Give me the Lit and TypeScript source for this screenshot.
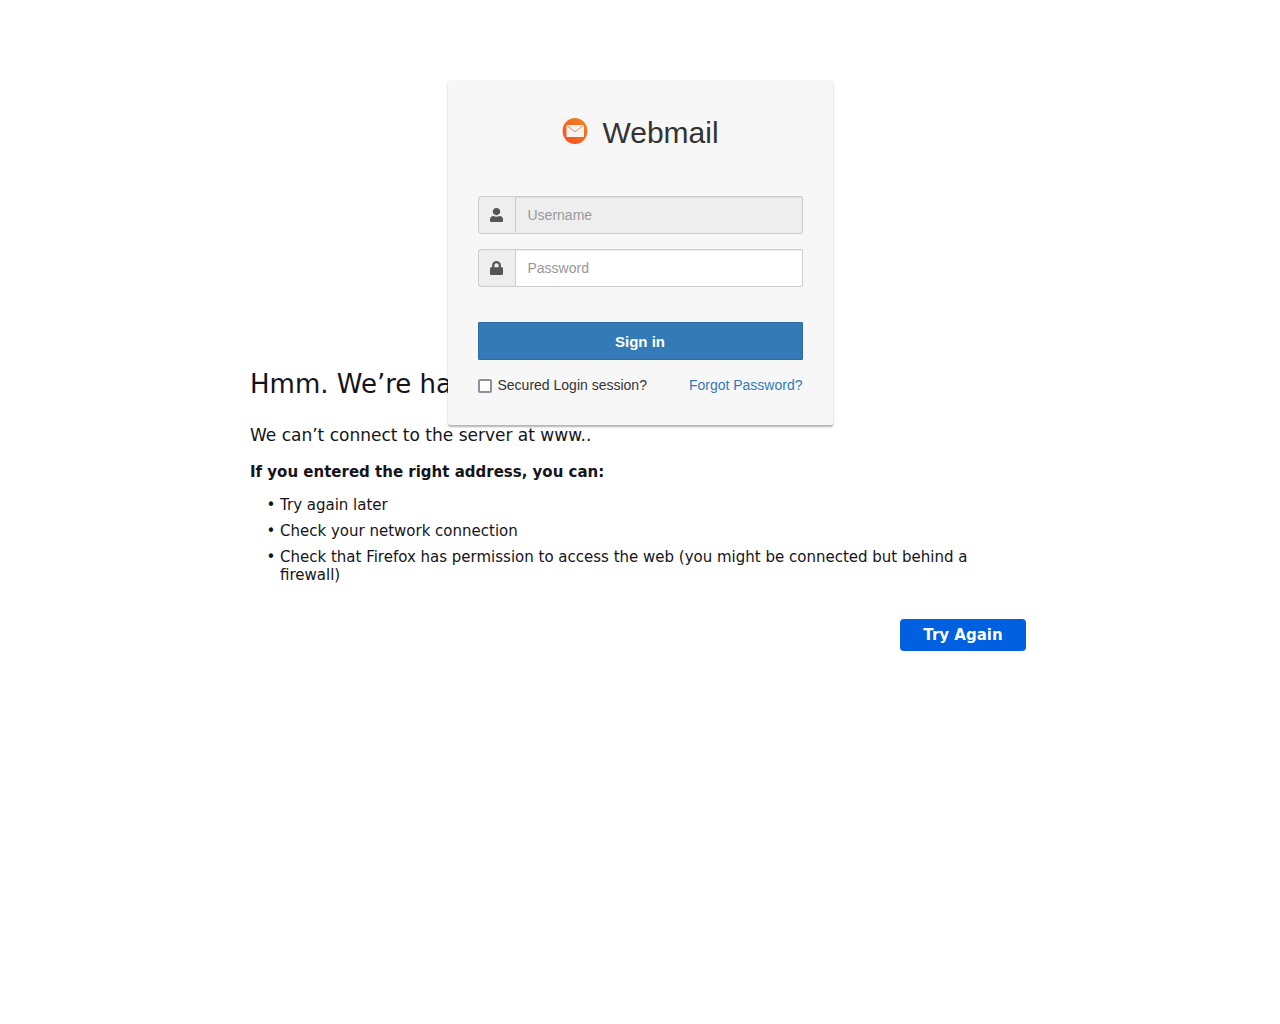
import { LitElement, html, css, svg } from "lit";
import { customElement } from "lit/decorators.js";

const userIcon = svg`<path fill="currentColor" d="M224 262c72 0 130-58 130-131S296 0 224 0 94 58 94 131s58 131 130 131zm104 26c-30 18-66 28-104 28s-74-10-104-28C46 288 0 340 0 412v52c0 26.500 21.500 48 48 48h352c26.500 0 48-21.500 48-48v-52c0-72-46-124-120-124z"/>`;
const lockIcon = svg`<path fill="currentColor" d="M400 224h-24v-72C376 68.200 307.800 0 224 0S72 68.200 72 152v72H48c-26.500 0-48 21.500-48 48v192c0 26.500 21.500 48 48 48h352c26.500 0 48-21.500 48-48V272c0-26.500-21.500-48-48-48zm-104 0H152v-72c0-39.700 32.300-72 72-72s72 32.300 72 72v72z"/>`;

@customElement("login-card")
export class LoginCard extends LitElement {
  static styles = css`
    :host {
      display: block;
      box-sizing: border-box;
      padding: 30px;
      border-radius: 2px;
      background: #f7f7f7;
      box-shadow: 0 2px 2px rgba(0, 0, 0, 0.3);
      color: #333;
      font: 14px/20px "Liberation Sans", Arial, sans-serif;
    }
    .brand {
      display: flex;
      align-items: center;
      justify-content: center;
      gap: 13px;
      margin: 0 0 43px;
      padding-top: 3px;
      font-size: 30px;
      line-height: 40px;
      font-weight: 400;
    }
    .logo {
      width: 28px;
      height: 28px;
      margin-bottom: 4px;
    }
    .form {
      display: flex;
      flex-direction: column;
    }
    .field {
      display: flex;
      margin-bottom: 15px;
    }
    .addon {
      display: grid;
      place-items: center;
      box-sizing: border-box;
      width: 37px;
      border: 1px solid #ccc;
      border-right: 0;
      border-radius: 4px 0 0 4px;
      background: #eee;
      color: #555;
    }
    .glyph {
      width: 13px;
      height: 14px;
    }
    .input {
      box-sizing: border-box;
      flex: 1;
      min-width: 0;
      height: 38px;
      margin: 0;
      padding: 6px 12px;
      border: 1px solid #ccc;
      border-radius: 0 2px 2px 0;
      background: #fff;
      box-shadow: inset 0 1px 1px rgba(0, 0, 0, 0.075);
      color: #555;
      font: inherit;
    }
    .input:read-only {
      background: #eee;
    }
    .input::placeholder {
      color: #999;
      opacity: 1;
    }
    .submit {
      height: 38px;
      margin: 20px 0 15px;
      padding: 1px 12px 0;
      border: 1px solid #2e6da4;
      border-radius: 1px;
      background: #337ab7;
      color: #fff;
      font: bold 15px/20px "Liberation Sans", Arial, sans-serif;
      cursor: pointer;
    }
    .options {
      display: flex;
      justify-content: space-between;
    }
    .remember {
      display: flex;
      align-items: center;
      gap: 6px;
    }
    .check {
      appearance: none;
      box-sizing: border-box;
      width: 14px;
      height: 14px;
      margin: 2px 0 0;
      border: 2px solid #8f8f9d;
      border-radius: 2px;
      background: #fff;
    }
    .check:checked {
      background: #0060df;
    }
    .forgot {
      color: #337ab7;
      text-decoration: none;
    }
  `;

  render() {
    return html`
      <h1 class="brand">
        <svg class="logo" viewBox="0 0 28 28" aria-hidden="true">
          <defs>
            <linearGradient id="disc" x1="0" y1="0.8" x2="0.7" y2="0">
              <stop offset="0" stop-color="#f6511f" />
              <stop offset="1" stop-color="#f08024" />
            </linearGradient>
          </defs>
          <rect width="28" height="28" fill="#f5f5f5" />
          <ellipse cx="14" cy="14" rx="12.400" ry="13" fill="url(#disc)" />
          <rect x="5.500" y="8" width="17.500" height="12" fill="#f5f3f1" />
          <path d="M5.500 8 14 14.800 23 8" fill="none" stroke="#ec9060" stroke-width="1" />
        </svg>
        <span>Webmail</span>
      </h1>
      <form class="form" @submit=${(e: Event) => e.preventDefault()}>
        <div class="field">
          <label class="addon" for="username" aria-label="Username">
            <svg class="glyph" viewBox="0 0 448 512" preserveAspectRatio="none" aria-hidden="true">${userIcon}</svg>
          </label>
          <input class="input" id="username" type="text" placeholder="Username" readonly />
        </div>
        <div class="field">
          <label class="addon" for="password" aria-label="Password">
            <svg class="glyph" viewBox="0 0 448 512" preserveAspectRatio="none" aria-hidden="true">${lockIcon}</svg>
          </label>
          <input class="input" id="password" type="password" placeholder="Password" />
        </div>
        <button class="submit" type="submit">Sign in</button>
        <div class="options">
          <label class="remember" for="secured">
            <input class="check" id="secured" type="checkbox" />
            <span>Secured Login session?</span>
          </label>
          <a class="forgot" href="#">Forgot Password?</a>
        </div>
      </form>
    `;
  }
}

@customElement("connection-error")
export class ConnectionError extends LitElement {
  static styles = css`
    :host {
      display: block;
      color: #15141a;
      font: 15px/18px "DejaVu Sans", sans-serif;
    }
    .title {
      margin: 0 0 22px;
      font-size: 26px;
      line-height: 36px;
      font-weight: 400;
    }
    .lead {
      margin: 0 0 17px;
      font-size: 17px;
      line-height: 22px;
    }
    .hint {
      margin: 0 0 15px;
      font-weight: 700;
    }
    .tips {
      display: flex;
      flex-direction: column;
      gap: 8px;
      margin: 0;
      padding-left: 30px;
      list-style: "• ";
    }
    .actions {
      display: flex;
      justify-content: flex-end;
      margin: 35px 4px 0;
    }
    .retry {
      min-width: 126px;
      height: 32px;
      padding: 0 20px;
      border: 0;
      border-radius: 4px;
      background: #0060df;
      color: #fbfbfe;
      font: bold 15px/18px "DejaVu Sans", sans-serif;
      cursor: pointer;
    }
  `;

  render() {
    return html`
      <h2 class="title">Hmm. We’re having trouble finding that site.</h2>
      <p class="lead">We can’t connect to the server at www..</p>
      <p class="hint">If you entered the right address, you can:</p>
      <ul class="tips">
        <li>Try again later</li>
        <li>Check your network connection</li>
        <li>Check that Firefox has permission to access the web (you might be connected but behind a firewall)</li>
      </ul>
      <div class="actions">
        <button class="retry" type="button">Try Again</button>
      </div>
    `;
  }
}

@customElement("app-root")
export class AppRoot extends LitElement {
  static styles = css`
    :host {
      display: block;
      min-height: 100vh;
      background: #fff;
    }
    .page {
      display: grid;
      grid-template-columns: minmax(0, 1fr);
      justify-items: center;
      align-items: start;
    }
    .error,
    .login {
      grid-area: 1 / 1;
      width: 100%;
    }
    .error {
      max-width: 780px;
      margin-top: 366px;
    }
    .login {
      max-width: 385px;
      margin-top: 80px;
      z-index: 1;
    }
  `;

  render() {
    return html`
      <main class="page">
        <connection-error class="error"></connection-error>
        <login-card class="login"></login-card>
      </main>
    `;
  }
}
